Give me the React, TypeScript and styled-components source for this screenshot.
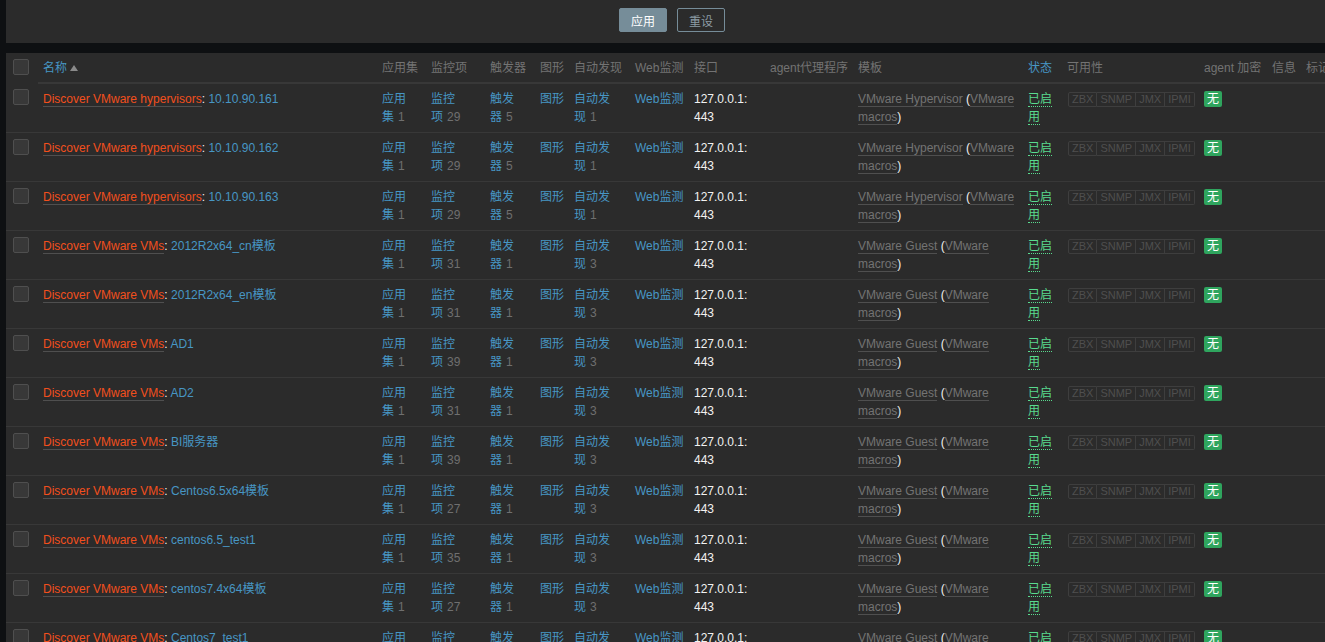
import styled, { createGlobalStyle } from 'styled-components';

interface IHostRow {
  prefix: string;
  host: string;
  apps: number;
  items: number;
  triggers: number;
  discovery: number;
  template: string;
}

const rows: IHostRow[] = [
  { prefix: 'Discover VMware hypervisors', host: '10.10.90.161', apps: 1, items: 29, triggers: 5, discovery: 1, template: 'VMware Hypervisor' },
  { prefix: 'Discover VMware hypervisors', host: '10.10.90.162', apps: 1, items: 29, triggers: 5, discovery: 1, template: 'VMware Hypervisor' },
  { prefix: 'Discover VMware hypervisors', host: '10.10.90.163', apps: 1, items: 29, triggers: 5, discovery: 1, template: 'VMware Hypervisor' },
  { prefix: 'Discover VMware VMs', host: '2012R2x64_cn模板', apps: 1, items: 31, triggers: 1, discovery: 3, template: 'VMware Guest' },
  { prefix: 'Discover VMware VMs', host: '2012R2x64_en模板', apps: 1, items: 31, triggers: 1, discovery: 3, template: 'VMware Guest' },
  { prefix: 'Discover VMware VMs', host: 'AD1', apps: 1, items: 39, triggers: 1, discovery: 3, template: 'VMware Guest' },
  { prefix: 'Discover VMware VMs', host: 'AD2', apps: 1, items: 31, triggers: 1, discovery: 3, template: 'VMware Guest' },
  { prefix: 'Discover VMware VMs', host: 'BI服务器', apps: 1, items: 39, triggers: 1, discovery: 3, template: 'VMware Guest' },
  { prefix: 'Discover VMware VMs', host: 'Centos6.5x64模板', apps: 1, items: 27, triggers: 1, discovery: 3, template: 'VMware Guest' },
  { prefix: 'Discover VMware VMs', host: 'centos6.5_test1', apps: 1, items: 35, triggers: 1, discovery: 3, template: 'VMware Guest' },
  { prefix: 'Discover VMware VMs', host: 'centos7.4x64模板', apps: 1, items: 27, triggers: 1, discovery: 3, template: 'VMware Guest' },
  { prefix: 'Discover VMware VMs', host: 'Centos7_test1', apps: 1, items: 35, triggers: 1, discovery: 3, template: 'VMware Guest' },
];

const columns: { label: string; width: number; active?: boolean }[] = [
  { label: '', width: 32 },
  { label: '名称', width: 339, active: true },
  { label: '应用集', width: 49 },
  { label: '监控项', width: 59 },
  { label: '触发器', width: 50 },
  { label: '图形', width: 34 },
  { label: '自动发现', width: 61 },
  { label: 'Web监测', width: 59 },
  { label: '接口', width: 76 },
  { label: 'agent代理程序', width: 88 },
  { label: '模板', width: 170 },
  { label: '状态', width: 39, active: true },
  { label: '可用性', width: 137 },
  { label: 'agent 加密', width: 68 },
  { label: '信息', width: 34 },
  { label: '标记', width: 80 },
];

// word joiner keeps the count on the same line as the last character of its link
const WJ = '\u2060';

const App = () => {
  return (
    <>
      <GlobalStyle />
      <Page>
        <FilterPanel>
          <ApplyButton>应用</ApplyButton>
          <ResetButton>重设</ResetButton>
        </FilterPanel>
        <TablePanel>
          <HostTable>
            <colgroup>
              {columns.map((col, i) => (
                <col key={i} style={{ width: col.width }} />
              ))}
            </colgroup>
            <thead>
              <tr>
                {columns.map((col, i) =>
                  i === 0 ? (
                    <CheckCell as="th" key={i}>
                      <Checkbox />
                    </CheckCell>
                  ) : (
                    <HeadCell key={i} $active={col.active}>
                      {col.label}
                      {i === 1 && <SortArrow />}
                    </HeadCell>
                  ),
                )}
              </tr>
            </thead>
            <tbody>
              {rows.map((row, index) => (
                <Row key={index}>
                  <CheckCell>
                    <Checkbox />
                  </CheckCell>
                  <Cell>
                    <DiscoveryLink>{row.prefix}</DiscoveryLink>: <Link>{row.host}</Link>
                  </Cell>
                  <Cell>
                    <Link>应用集</Link>
                    <Count>{WJ + row.apps}</Count>
                  </Cell>
                  <Cell>
                    <Link>监控项</Link>
                    <Count>{WJ + row.items}</Count>
                  </Cell>
                  <Cell>
                    <Link>触发器</Link>
                    <Count>{WJ + row.triggers}</Count>
                  </Cell>
                  <Cell>
                    <Link>图形</Link>
                  </Cell>
                  <Cell>
                    <Link>自动发现</Link>
                    <Count>{WJ + row.discovery}</Count>
                  </Cell>
                  <Cell>
                    <Link>Web监测</Link>
                  </Cell>
                  <Cell>127.0.0.1: 443</Cell>
                  <Cell />
                  <Cell>
                    <TemplateLink>{row.template}</TemplateLink> (<TemplateLink>VMware macros</TemplateLink>)
                  </Cell>
                  <Cell>
                    <StatusLink>已启用</StatusLink>
                  </Cell>
                  <Cell>
                    <AvailabilityGroup>
                      {['ZBX', 'SNMP', 'JMX', 'IPMI'].map((name) => (
                        <AvailabilityBadge key={name}>{name}</AvailabilityBadge>
                      ))}
                    </AvailabilityGroup>
                  </Cell>
                  <Cell>
                    <EncryptionBadge>无</EncryptionBadge>
                  </Cell>
                  <Cell />
                  <Cell />
                </Row>
              ))}
            </tbody>
          </HostTable>
        </TablePanel>
      </Page>
    </>
  );
};

export default App;

const GlobalStyle = createGlobalStyle`
  html, body {
    margin: 0;
    padding: 0;
    background-color: #0e1012;
    overflow: hidden;
  }
  body {
    font-family: "Liberation Sans", Arial, "Noto Sans CJK SC", sans-serif;
    font-size: 12px;
    color: #f2f2f2;
  }
`;

const Page = styled.div`
  padding-left: 6px;
  width: 1375px;
`;

const FilterPanel = styled.div`
  display: flex;
  justify-content: center;
  gap: 10px;
  width: 1332px;
  height: 43px;
  box-sizing: border-box;
  padding-top: 8px;
  background-color: #2b2b2b;
`;

const ApplyButton = styled.button`
  width: 48px;
  height: 24px;
  border: 1px solid #768d99;
  border-radius: 2px;
  background-color: #768d99;
  color: #ffffff;
  font-family: inherit;
  font-size: 12px;
  padding: 0;
`;

const ResetButton = styled(ApplyButton)`
  background-color: transparent;
  color: #8b9ba4;
`;

const TablePanel = styled.div`
  margin-top: 10px;
  background-color: #2b2b2b;
`;

const HostTable = styled.table`
  width: 1375px;
  table-layout: fixed;
  border-collapse: collapse;
  border-spacing: 0;
`;

const HeadCell = styled.th<{ $active?: boolean }>`
  padding: 6px 5px 5px;
  line-height: 18px;
  text-align: left;
  font-weight: normal;
  white-space: nowrap;
  overflow: hidden;
  vertical-align: top;
  color: ${({ $active }) => ($active ? '#4796c4' : '#737373')};
  border-bottom: 2px solid #383838;
`;

const SortArrow = styled.span`
  display: inline-block;
  margin-left: 3px;
  width: 0;
  height: 0;
  border-left: 4px solid transparent;
  border-right: 4px solid transparent;
  border-bottom: 6px solid #8a8a8a;
  vertical-align: 1px;
`;

const Row = styled.tr`
  border-bottom: 1px solid #383838;
`;

const Cell = styled.td`
  padding: 6px 5px;
  line-height: 18px;
  vertical-align: top;
  text-align: left;
  height: 36px;
`;

const CheckCell = styled.td`
  padding: 6px 0 0 7px;
  vertical-align: top;
  text-align: left;
  border-bottom: inherit;
`;

const Checkbox = styled.span`
  display: block;
  width: 16px;
  height: 16px;
  box-sizing: border-box;
  border: 1px solid #4f4f4f;
  border-radius: 2px;
  background-color: #383838;
`;

const Link = styled.span`
  color: #4796c4;
`;

const DiscoveryLink = styled.span`
  color: #f24f1d;
  border-bottom: 1px solid #4f4f4f;
`;

const Count = styled.span`
  margin-left: 4px;
  color: #6f6f6f;
`;

const TemplateLink = styled.span`
  color: #737373;
  border-bottom: 1px solid #4f4f4f;
`;

const StatusLink = styled.span`
  color: #59db8f;
  border-bottom: 1px dotted #59db8f;
`;

const AvailabilityGroup = styled.span`
  display: inline-flex;
  margin-top: 1px;
  margin-left: 1px;
`;

const AvailabilityBadge = styled.span`
  display: block;
  height: 13px;
  line-height: 13px;
  padding: 0 3px;
  font-size: 11px;
  color: #4f4f4f;
  border: 1px solid #3e3e3e;
  & + & {
    border-left: none;
  }
  &:first-child {
    border-radius: 2px 0 0 2px;
  }
  &:last-child {
    border-radius: 0 2px 2px 0;
  }
`;

const EncryptionBadge = styled.span`
  display: inline-block;
  margin-top: 1px;
  padding: 0 3px;
  line-height: 16px;
  border-radius: 2px;
  background-color: #2fa55e;
  color: #ffffff;
`;
